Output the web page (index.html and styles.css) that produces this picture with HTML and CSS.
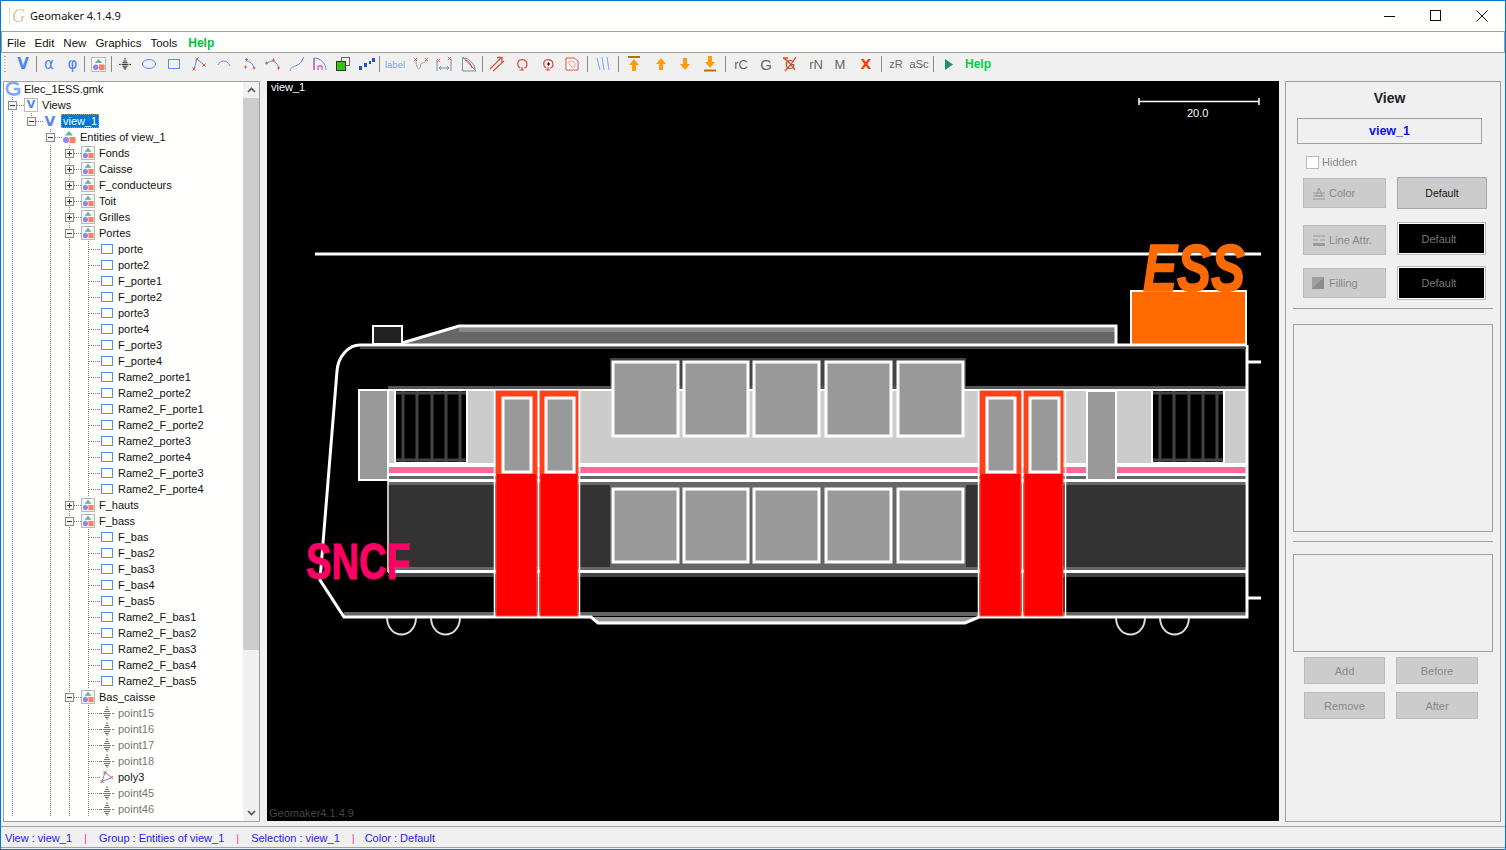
FILE: index.html
```html
<!DOCTYPE html>
<html lang="fr">
<head>
<meta charset="utf-8">
<title>Geomaker 4.1.4.9</title>
<link rel="stylesheet" href="styles.css">
</head>
<body>
<svg class="sprite" aria-hidden="true">
  <defs>
    <symbol id="i-group" viewBox="0 0 14 14">
      <path d="M7 1l4 4.5H3z" fill="#5fb88b"/>
      <circle cx="4" cy="10" r="3" fill="#9a80f0"/>
      <rect x="7.5" y="7" width="6" height="6" fill="#ff7f66"/>
    </symbol>
    <symbol id="i-rect" viewBox="0 0 14 14">
      <rect x="1.5" y="2.5" width="11" height="9" fill="#fff" stroke="#5a8cf0"/>
    </symbol>
    <symbol id="i-point" viewBox="0 0 14 14">
      <path d="M7 0v2M5 3.500h4M4 5.500h6M0 7.500h2M3 7.500h8M12 7.500h2M4 9.500h6M5 11.500h4M7 12v2" stroke="currentColor" fill="none"/>
    </symbol>
    <symbol id="i-poly" viewBox="0 0 14 14">
      <path d="M5 2.500L12 7.500 2 11.500z" fill="none" stroke="#5a8cf0"/>
      <path d="M3.500 1l3 3M6.500 1l-3 3M10 6l3 3M13 6l-3 3M.5 10l3 3M3.500 10l-3 3" stroke="#f0503c" fill="none"/>
    </symbol>
    <symbol id="i-cross" viewBox="0 0 6 6">
      <path d="M1 1l4 4M5 1L1 5" stroke="#f0503c" fill="none"/>
    </symbol>
  </defs>
</svg>

<div class="window">
  <header class="titlebar">
    <span class="logo">G</span>
    <span class="title">Geomaker 4.1.4.9</span>
    <div class="controls">
      <span class="control"><svg width="12" height="12" viewBox="0 0 12 12"><path d="M0 6.500h11" stroke="#111"/></svg></span>
      <span class="control"><svg width="12" height="12" viewBox="0 0 12 12"><rect x=".5" y=".5" width="10" height="10" fill="none" stroke="#111"/></svg></span>
      <span class="control"><svg width="12" height="12" viewBox="0 0 12 12"><path d="M.5.5l11 11M11.500.5l-11 11" stroke="#111"/></svg></span>
    </div>
  </header>

  <nav class="menubar">
    <span class="menu">File</span>
    <span class="menu">Edit</span>
    <span class="menu">New</span>
    <span class="menu">Graphics</span>
    <span class="menu">Tools</span>
    <span class="menu help">Help</span>
  </nav>

  <div class="toolbar">
    <span class="grip"></span>
    <span class="tool w26 t-v">V</span>
    <span class="sep"></span>
    <span class="tool w24 t-greek">α</span>
    <span class="tool w23 t-greek">φ</span>
    <span class="sep"></span>
    <span class="tool w26"><svg class="boxed" width="15" height="15"><use href="#i-group"/></svg></span>
    <span class="sep"></span>
    <span class="tool"><svg class="ink" width="12" height="12" viewBox="0 0 14 14"><use href="#i-point" width="14" height="14"/></svg></span>
    <span class="tool w24"><svg width="16" height="12" viewBox="0 0 16 12"><ellipse cx="8" cy="6" rx="6.500" ry="4.500" fill="none" stroke="#5a8cf0"/></svg></span>
    <span class="tool"><svg width="14" height="12" viewBox="0 0 14 12"><rect x="1.500" y="1.500" width="11" height="9" fill="none" stroke="#5a8cf0"/></svg></span>
    <span class="tool"><svg width="14" height="14" viewBox="0 0 14 14"><path d="M2 12L5 2l7 6" fill="none" stroke="#5a8cf0"/><path d="M.5 10.500l3 3M3.500 10.500l-3 3M3.500.5l3 3M6.500.5l-3 3M10.500 6.500l3 3M13.500 6.500l-3 3" stroke="#f0503c" fill="none"/></svg></span>
    <span class="tool"><svg width="14" height="10" viewBox="0 0 14 10"><path d="M1 6C3 1 10 0 13 7" fill="none" stroke="#5a8cf0"/></svg></span>
    <span class="tool"><svg width="14" height="14" viewBox="0 0 14 14"><path d="M4 4c4 0 7 3 8 7" fill="none" stroke="#5a8cf0"/><path d="M2 10h3M3.500 8.500v3M3 2.500h3M4.500 1v3M10.500 11h3M12 9.500v3" stroke="#f0503c"/></svg></span>
    <span class="tool w24"><svg width="16" height="12" viewBox="0 0 16 12"><path d="M2 6c2-4 9-5 12 4" fill="none" stroke="#5a8cf0"/><path d="M0 5h3M1.500 3.500v3M12 10h3M13.500 8.500v3M7 2h3M8.500.5v3" stroke="#f0503c"/></svg></span>
    <span class="tool w24"><svg width="16" height="16" viewBox="0 0 16 16"><path d="M1 15c1-5 5-4 9-7s3-5 5-7" fill="none" stroke="#5a8cf0"/></svg></span>
    <span class="tool w22"><svg width="14" height="14" viewBox="0 0 14 14"><path d="M1 13V1c6 0 12 5 12 12" fill="none" stroke="#5a8cf0"/><path d="M1 13V1" stroke="#d040a0"/><path d="M5 13V9h4v4" fill="none" stroke="#e020c0"/></svg></span>
    <span class="tool w24"><svg width="14" height="14" viewBox="0 0 14 14"><rect x="5.500" y=".5" width="8" height="8" fill="#eee" stroke="#666"/><rect x=".5" y="4.500" width="9" height="9" fill="#34c414" stroke="#333"/></svg></span>
    <span class="tool w24"><svg width="16" height="14" viewBox="0 0 16 14"><path d="M0 9h3v4H0zM5 6h3v4H5zM10 4h2v3h-2zM13 1h3v4h-3z" fill="#1f50d0"/></svg></span>
    <span class="sep"></span>
    <span class="tool w30 t-label">label</span>
    <span class="tool w22"><svg width="16" height="14" viewBox="0 0 16 14"><path d="M3 3c0 4 1 9 3 9s1-6 3-6 3-1 5-3" fill="none" stroke="#8da0b8"/><use href="#i-cross" x="0" y="0" width="5" height="5"/><use href="#i-cross" x="11" y="0" width="5" height="5"/></svg></span>
    <span class="tool w24"><svg width="16" height="16" viewBox="0 0 16 16"><path d="M1 4v11M15 2v13M3 12h10M3 12l2-2M3 12l2 2M13 12l-2-2M13 12l-2 2" fill="none" stroke="#7d8ca0"/><use href="#i-cross" x="0" y="2" width="5" height="5"/><use href="#i-cross" x="11" y="0" width="5" height="5"/></svg></span>
    <span class="tool w26"><svg width="16" height="16" viewBox="0 0 16 16"><path d="M1.500 1v14H15M1.500 1L15 15" fill="none" stroke="#7d8ca0"/><path d="M2 2c6 0 12 6 12 12" fill="none" stroke="#7d8ca0"/><path d="M4 4c4 1 6 4 7 8" fill="none" stroke="#e8402c"/></svg></span>
    <span class="sep"></span>
    <span class="tool w28"><svg width="16" height="16" viewBox="0 0 16 16"><path d="M1 13L12 2M8 1.500h5v5M4 15L15 5" fill="none" stroke="#d0564c" stroke-width="1.300"/></svg></span>
    <span class="tool w22"><svg width="12" height="13" viewBox="0 0 12 13"><path d="M4 10C1 8 1 3 4 2s7 0 7 4-2 4-3 4M3.500 12H8M6 9v3" fill="none" stroke="#e04434" stroke-width="1.200"/></svg></span>
    <span class="tool w30"><svg width="13" height="13" viewBox="0 0 13 13"><path d="M4 10C1 8 1 3 4 2s7 0 7 4-2 4-3 4M3.500 12H8M6 9v3" fill="none" stroke="#e04434" stroke-width="1.200"/><path d="M5 6h3M6.500 4.500v3" stroke="#000"/></svg></span>
    <span class="tool w18 gap6"><svg width="14" height="14" viewBox="0 0 14 14"><path d="M1 1h8l4 3v9H1z" fill="#fff" stroke="#d8503c"/><path d="M4 4h4l2 2v4H7L4 7z" fill="#fff0ee" stroke="#f0a090"/></svg></span>
    <span class="sep"></span>
    <span class="tool w30"><svg width="14" height="14" viewBox="0 0 14 14"><path d="M1 1l3 12M6 0l2 13M11 0l2 13" fill="none" stroke="#7da6ff"/></svg></span>
    <span class="sep"></span>
    <span class="tool w30"><svg width="14" height="16" viewBox="0 0 14 16"><path d="M1 1h12" stroke="#b87000" stroke-width="2"/><path d="M7 3l5 6H9v6H5V9H2z" fill="#ff9c0e"/></svg></span>
    <span class="tool w23"><svg width="12" height="14" viewBox="0 0 12 14"><path d="M6 1l5 6H8v6H4V7H1z" fill="#ff9c0e"/></svg></span>
    <span class="tool w26"><svg width="12" height="14" viewBox="0 0 12 14"><path d="M6 13l5-6H8V1H4v6H1z" fill="#ff9c0e"/></svg></span>
    <span class="tool w24 gap3"><svg width="14" height="16" viewBox="0 0 14 16"><path d="M7 12l5-6H9V0H5v6H2z" fill="#ff9c0e"/><path d="M1 14.500h12" stroke="#b87000" stroke-width="2"/></svg></span>
    <span class="sep"></span>
    <span class="tool w30 t-txt">rC</span>
    <span class="tool w20 t-txt t-big">G</span>
    <span class="tool w28 t-stack"><span class="t-txt">G</span><svg class="strike" width="16" height="16" viewBox="0 0 16 16"><path d="M1 2c4 1 9 8 12 12M14 1C11 6 7 11 3 15M1 2h5" fill="none" stroke="#ff4a14" stroke-width="1.400"/></svg></span>
    <span class="tool w24 t-txt">rN</span>
    <span class="tool w24 t-txt">M</span>
    <span class="tool w28 t-x">X</span>
    <span class="sep gap1"></span>
    <span class="tool w28 t-txt t-small">zR</span>
    <span class="tool w18 gap5 t-txt t-small">aSc</span>
    <span class="sep"></span>
    <span class="tool w30"><svg width="10" height="11" viewBox="0 0 10 11"><path d="M1 0l8 5.500L1 11z" fill="#1d9468"/></svg></span>
    <span class="t-help">Help</span>
  </div>

  <main class="main">
    <section class="tree-panel">
      <div class="tree">
        <div class="row root"><svg class="glyph" width="16" height="16" viewBox="0 0 16 16"><path d="M13.500 4C11 1 5 1 3 4s-1 8 3 9 7 0 8-1V8H9" fill="none" stroke="#7da6ff" stroke-width="2.600"/></svg><span class="label">Elec_1ESS.gmk</span></div>
        <div class="row open l0"><i class="exp"></i><i class="h"></i><span class="vbox">V</span><span class="label">Views</span></div>
        <div class="row open l1 gv"><i class="exp"></i><i class="h"></i><span class="vbare">V</span><span class="label sel">view_1</span></div>
        <div class="row open l2 gv"><i class="exp"></i><i class="h"></i><svg class="glyph" width="14" height="14"><use href="#i-group"/></svg><span class="label">Entities of view_1</span></div>
        <div class="row l3 g3"><i class="exp plus"></i><i class="h"></i><svg class="boxed" width="14" height="14"><use href="#i-group"/></svg><span class="label">Fonds</span></div>
        <div class="row l3 g3"><i class="exp plus"></i><i class="h"></i><svg class="boxed" width="14" height="14"><use href="#i-group"/></svg><span class="label">Caisse</span></div>
        <div class="row l3 g3"><i class="exp plus"></i><i class="h"></i><svg class="boxed" width="14" height="14"><use href="#i-group"/></svg><span class="label">F_conducteurs</span></div>
        <div class="row l3 g3"><i class="exp plus"></i><i class="h"></i><svg class="boxed" width="14" height="14"><use href="#i-group"/></svg><span class="label">Toit</span></div>
        <div class="row l3 g3"><i class="exp plus"></i><i class="h"></i><svg class="boxed" width="14" height="14"><use href="#i-group"/></svg><span class="label">Grilles</span></div>
        <div class="row l3 g3"><i class="exp"></i><i class="h"></i><svg class="boxed" width="14" height="14"><use href="#i-group"/></svg><span class="label">Portes</span></div>
        <div class="row leaf g4"><i class="h"></i><svg width="14" height="14"><use href="#i-rect"/></svg><span class="label">porte</span></div>
        <div class="row leaf g4"><i class="h"></i><svg width="14" height="14"><use href="#i-rect"/></svg><span class="label">porte2</span></div>
        <div class="row leaf g4"><i class="h"></i><svg width="14" height="14"><use href="#i-rect"/></svg><span class="label">F_porte1</span></div>
        <div class="row leaf g4"><i class="h"></i><svg width="14" height="14"><use href="#i-rect"/></svg><span class="label">F_porte2</span></div>
        <div class="row leaf g4"><i class="h"></i><svg width="14" height="14"><use href="#i-rect"/></svg><span class="label">porte3</span></div>
        <div class="row leaf g4"><i class="h"></i><svg width="14" height="14"><use href="#i-rect"/></svg><span class="label">porte4</span></div>
        <div class="row leaf g4"><i class="h"></i><svg width="14" height="14"><use href="#i-rect"/></svg><span class="label">F_porte3</span></div>
        <div class="row leaf g4"><i class="h"></i><svg width="14" height="14"><use href="#i-rect"/></svg><span class="label">F_porte4</span></div>
        <div class="row leaf g4"><i class="h"></i><svg width="14" height="14"><use href="#i-rect"/></svg><span class="label">Rame2_porte1</span></div>
        <div class="row leaf g4"><i class="h"></i><svg width="14" height="14"><use href="#i-rect"/></svg><span class="label">Rame2_porte2</span></div>
        <div class="row leaf g4"><i class="h"></i><svg width="14" height="14"><use href="#i-rect"/></svg><span class="label">Rame2_F_porte1</span></div>
        <div class="row leaf g4"><i class="h"></i><svg width="14" height="14"><use href="#i-rect"/></svg><span class="label">Rame2_F_porte2</span></div>
        <div class="row leaf g4"><i class="h"></i><svg width="14" height="14"><use href="#i-rect"/></svg><span class="label">Rame2_porte3</span></div>
        <div class="row leaf g4"><i class="h"></i><svg width="14" height="14"><use href="#i-rect"/></svg><span class="label">Rame2_porte4</span></div>
        <div class="row leaf g4"><i class="h"></i><svg width="14" height="14"><use href="#i-rect"/></svg><span class="label">Rame2_F_porte3</span></div>
        <div class="row leaf g4"><i class="h"></i><svg width="14" height="14"><use href="#i-rect"/></svg><span class="label">Rame2_F_porte4</span></div>
        <div class="row l3 g3"><i class="exp plus"></i><i class="h"></i><svg class="boxed" width="14" height="14"><use href="#i-group"/></svg><span class="label">F_hauts</span></div>
        <div class="row l3 g3"><i class="exp"></i><i class="h"></i><svg class="boxed" width="14" height="14"><use href="#i-group"/></svg><span class="label">F_bass</span></div>
        <div class="row leaf g4"><i class="h"></i><svg width="14" height="14"><use href="#i-rect"/></svg><span class="label">F_bas</span></div>
        <div class="row leaf g4"><i class="h"></i><svg width="14" height="14"><use href="#i-rect"/></svg><span class="label">F_bas2</span></div>
        <div class="row leaf g4"><i class="h"></i><svg width="14" height="14"><use href="#i-rect"/></svg><span class="label">F_bas3</span></div>
        <div class="row leaf g4"><i class="h"></i><svg width="14" height="14"><use href="#i-rect"/></svg><span class="label">F_bas4</span></div>
        <div class="row leaf g4"><i class="h"></i><svg width="14" height="14"><use href="#i-rect"/></svg><span class="label">F_bas5</span></div>
        <div class="row leaf g4"><i class="h"></i><svg width="14" height="14"><use href="#i-rect"/></svg><span class="label">Rame2_F_bas1</span></div>
        <div class="row leaf g4"><i class="h"></i><svg width="14" height="14"><use href="#i-rect"/></svg><span class="label">Rame2_F_bas2</span></div>
        <div class="row leaf g4"><i class="h"></i><svg width="14" height="14"><use href="#i-rect"/></svg><span class="label">Rame2_F_bas3</span></div>
        <div class="row leaf g4"><i class="h"></i><svg width="14" height="14"><use href="#i-rect"/></svg><span class="label">Rame2_F_bas4</span></div>
        <div class="row leaf g4"><i class="h"></i><svg width="14" height="14"><use href="#i-rect"/></svg><span class="label">Rame2_F_bas5</span></div>
        <div class="row l3 g3"><i class="exp"></i><i class="h"></i><svg class="boxed" width="14" height="14"><use href="#i-group"/></svg><span class="label">Bas_caisse</span></div>
        <div class="row leaf g4 muted"><i class="h"></i><svg width="14" height="14"><use href="#i-point"/></svg><span class="label">point15</span></div>
        <div class="row leaf g4 muted"><i class="h"></i><svg width="14" height="14"><use href="#i-point"/></svg><span class="label">point16</span></div>
        <div class="row leaf g4 muted"><i class="h"></i><svg width="14" height="14"><use href="#i-point"/></svg><span class="label">point17</span></div>
        <div class="row leaf g4 muted"><i class="h"></i><svg width="14" height="14"><use href="#i-point"/></svg><span class="label">point18</span></div>
        <div class="row leaf g4"><i class="h"></i><svg width="14" height="14"><use href="#i-poly"/></svg><span class="label">poly3</span></div>
        <div class="row leaf g4 muted"><i class="h"></i><svg width="14" height="14"><use href="#i-point"/></svg><span class="label">point45</span></div>
        <div class="row leaf g4 muted"><i class="h"></i><svg width="14" height="14"><use href="#i-point"/></svg><span class="label">point46</span></div>
      </div>
      <div class="scrollbar">
        <span class="arrow"><svg width="9" height="6" viewBox="0 0 9 6"><path d="M1 5l3.500-3.500L8 5" fill="none" stroke="#555" stroke-width="1.600"/></svg></span>
        <span class="thumb"></span>
        <span class="track"></span>
        <span class="arrow"><svg width="9" height="6" viewBox="0 0 9 6"><path d="M1 1l3.500 3.500L8 1" fill="none" stroke="#555" stroke-width="1.600"/></svg></span>
      </div>
    </section>

    <section class="canvas">
      <svg class="drawing" width="1012" height="740" viewBox="267 81 1012 740">
        <text class="c-name" x="271" y="91">view_1</text>
        <path class="line1" d="M1139 98v7M1259 98v7M1139 101.500h120"/>
        <text class="c-scale" x="1187" y="117">20.0</text>
        <text class="c-foot" x="269" y="817">Geomaker4.1.4.9</text>

        <path class="line" d="M315 254h946"/>

        <!-- roof -->
        <path class="roof" d="M459 326h657v18H402z"/>
        <rect class="roof-hi" x="459" y="328" width="656" height="4"/>
        <path class="line" d="M402 343l57-17h657v18"/>
        <rect class="cap" x="373" y="326" width="29" height="18"/>

        <!-- ESS box -->
        <rect class="ess" x="1131" y="291" width="115" height="54"/>

        <!-- upper light band, pink stripe, dark lower band -->
        <rect class="halo3" x="610" y="358" width="356" height="28"/>
        <rect class="halo" x="388" y="386" width="858" height="4"/>
        <rect class="band" x="388" y="390" width="858" height="74"/>
        <rect class="white" x="388" y="389" width="858" height="2"/>
        <rect class="white" x="388" y="463" width="858" height="4"/>
        <rect class="pink" x="388" y="467" width="858" height="6"/>
        <rect class="white" x="388" y="473" width="858" height="3"/>
        <rect class="halo2" x="388" y="476" width="858" height="3"/>
        <rect class="white" x="388" y="479" width="858" height="3"/>
        <rect class="halo2" x="388" y="482" width="858" height="3"/>
        <rect class="dark" x="389" y="485" width="856" height="82"/>
        <rect class="halo2" x="610" y="485" width="356" height="82"/>
        <rect class="halo2" x="388" y="567" width="858" height="3"/>
        <rect class="white" x="388" y="570" width="858" height="3"/>
        <rect class="halo3" x="388" y="573" width="858" height="4"/>
        <rect class="halo2" x="344" y="612" width="902" height="4"/>

        <!-- body outline -->
        <path class="under" d="M591 617l7 6h367l14-6z"/>
        <path class="line" d="M1247 345H360c-12 0-22 12-23 26L320 580l24 37h247l7 6h367l14-6h268V345"/>
        <path class="line" d="M1247 362h14M1247 598h14"/>
        <path class="line1" d="M388 390v182"/>
        <rect class="halo3" x="360" y="347" width="886" height="2"/>

        <!-- left column + right column -->
        <rect class="col" x="359" y="390" width="29" height="90"/>
        <rect class="col" x="1087" y="391" width="29" height="89"/>

        <!-- grilles -->
        <g class="grille">
          <rect class="g-bg" x="395" y="390" width="72" height="73"/>
          <path class="g-bars" d="M403 391v71M417 391v71M432 391v71M446 391v71M460 391v71M396 393h70M396 460h70"/>
          <rect class="g-bg" x="1152" y="390" width="72" height="73"/>
          <path class="g-bars" d="M1160 391v71M1174 391v71M1189 391v71M1203 391v71M1217 391v71M1153 393h70M1153 460h70"/>
        </g>

        <!-- doors -->
        <rect class="door" x="496" y="391" width="41" height="225"/>
        <rect class="door" x="540" y="391" width="38" height="225"/>
        <rect class="door" x="980" y="391" width="41" height="225"/>
        <rect class="door" x="1024" y="391" width="39" height="225"/>
        <rect class="door-top" x="496" y="391" width="41" height="83"/>
        <rect class="door-top" x="540" y="391" width="38" height="83"/>
        <rect class="door-top" x="980" y="391" width="41" height="83"/>
        <rect class="door-top" x="1024" y="391" width="39" height="83"/>
        <path class="line1" d="M494.500 391v226M538.500 391v226M579.500 391v226M978.500 391v226M1022.500 391v226M1065.500 391v226"/>
        <rect class="win" x="503" y="398" width="28" height="74"/>
        <rect class="win" x="546" y="398" width="28" height="74"/>
        <rect class="win" x="987" y="398" width="28" height="74"/>
        <rect class="win" x="1030" y="398" width="29" height="74"/>

        <!-- upper windows -->
        <rect class="win" x="613" y="362" width="65" height="74"/>
        <rect class="win" x="684" y="362" width="64" height="74"/>
        <rect class="win" x="754" y="362" width="65" height="74"/>
        <rect class="win" x="826" y="362" width="65" height="74"/>
        <rect class="win" x="898" y="362" width="65" height="74"/>
        <!-- lower windows -->
        <rect class="win" x="613" y="489" width="65" height="73"/>
        <rect class="win" x="684" y="489" width="64" height="73"/>
        <rect class="win" x="754" y="489" width="65" height="73"/>
        <rect class="win" x="826" y="489" width="65" height="73"/>
        <rect class="win" x="898" y="489" width="65" height="73"/>

        <!-- wheels -->
        <path class="wheel" d="M387 618c1 22 28 22 29 0M431 618c1 22 28 22 29 0M1116 618c1 22 28 22 29 0M1160 618c1 22 28 22 29 0"/>

        <text class="t-ess" x="1143" y="291" textLength="102" lengthAdjust="spacingAndGlyphs">ESS</text>
        <text class="t-sncf" x="306" y="579" textLength="104" lengthAdjust="spacingAndGlyphs">SNCF</text>
      </svg>
    </section>

    <aside class="side">
      <h2 class="side-title">View</h2>
      <div class="name-box">view_1</div>
      <label class="check"><span class="box"></span>Hidden</label>
      <div class="attr">
        <span class="btn"><svg width="14" height="13" viewBox="0 0 14 13"><path d="M1 6h12M1 9h12M1 12h12M7 1l3 8H4z" fill="none" stroke="#999"/></svg>Color</span>
        <span class="val light">Default</span>
      </div>
      <div class="attr low">
        <span class="btn"><svg width="14" height="13" viewBox="0 0 14 13"><path d="M1 2h12M1 6h5M8 6h5" fill="none" stroke="#999"/><path d="M1 10.500h12" stroke="#999" stroke-width="3"/></svg>Line Attr.</span>
        <span class="val black">Default</span>
      </div>
      <div class="attr third">
        <span class="btn fill-btn"><svg width="12" height="12" viewBox="0 0 12 12"><rect width="12" height="12" fill="#a0a0a0"/><path d="M0 12L12 0v12z" fill="#8c8c8c"/></svg>Filling</span>
        <span class="val black">Default</span>
      </div>
      <hr class="rule first">
      <div class="list tall"></div>
      <hr class="rule">
      <div class="list short"></div>
      <div class="actions">
        <span class="act">Add</span>
        <span class="act">Before</span>
        <span class="act">Remove</span>
        <span class="act">After</span>
      </div>
    </aside>
  </main>

  <footer class="status">
    <span>View : view_1</span><b>|</b>
    <span>Group : Entities of view_1</span><b>|</b>
    <span>Selection : view_1</span><b>|</b>
    <span class="last">Color : Default</span>
  </footer>
</div>
</body>
</html>
```

FILE: styles.css
```css
* { box-sizing: border-box; }
html, body { margin: 0; padding: 0; }
body {
  width: 1506px;
  height: 850px;
  overflow: hidden;
  font-family: "Liberation Sans", Arial, sans-serif;
  font-size: 11px;
  color: #111;
  background: #f0f0f0;
}
.sprite { position: absolute; width: 0; height: 0; }
svg { display: block; flex: none; }

.window {
  width: 1506px;
  height: 850px;
  border: 1px solid #0078d7;
  background: #f0f0f0;
  display: flex;
  flex-direction: column;
}

/* title */
.titlebar {
  height: 30px;
  flex: none;
  background: #fffffd;
  display: flex;
  align-items: center;
  padding-left: 8px;
  padding-bottom: 1px;
}
.logo {
  width: 21px;
  height: 18px;
  font: italic 18px/18px "Liberation Serif", serif;
  color: #d6c9a8;
  border-left: 1px solid #e6dcc4;
  padding-left: 2px;
}
.title { font-family: "Noto Sans", sans-serif; font-size: 11px; }
.controls { margin-left: auto; display: flex; }
.control { width: 46px; height: 29px; display: flex; align-items: center; justify-content: center; }

/* menu */
.menubar {
  height: 22px;
  flex: none;
  background: #fffffd;
  border: 1px solid #a0a0a0;
  display: flex;
  align-items: center;
  padding: 2px 0 0 5px;
  gap: 9px;
  font-size: 11.500px;
}
.menu { color: #111; }
.menu.help { color: #00c038; font-weight: 700; font-size: 12px; margin-left: 2px; }

/* toolbar */
.toolbar {
  height: 27px;
  flex: none;
  display: flex;
  align-items: center;
  padding: 0 0 5px 1px;
  color: #666;
}
.grip {
  width: 8px;
  height: 17px;
  background: repeating-linear-gradient(to bottom, #bbb 0 1px, transparent 1px 3px) 2px 0 / 2px 100% no-repeat;
}
.tool {
  width: 25px;
  flex: none;
  height: 22px;
  display: flex;
  align-items: center;
  justify-content: center;
  position: relative;
}
.w18 { width: 18px; } .w20 { width: 20px; } .w22 { width: 22px; } .w23 { width: 23px; }
.w24 { width: 24px; } .w26 { width: 26px; } .w28 { width: 28px; } .w30 { width: 30px; }
.gap1 { margin-left: 1px; } .gap3 { margin-right: 3px; } .gap5 { margin-right: 5px; } .gap6 { margin-right: 6px; }
.sep { width: 1px; height: 16px; background: #888; flex: none; }
.boxed { border: 1px solid #bbb; background: #f6f6f6; }
.ink { color: #111; }
.t-v { color: #4f86f0; font-weight: 700; font-size: 15px; font-family: "DejaVu Sans", sans-serif; }
.t-greek { color: #4f86f0; font-size: 15px; font-family: "DejaVu Sans", sans-serif; }
.t-label { color: #7da6e8; font-size: 9.500px; }
.t-txt { color: #666; font-size: 13px; }
.t-big { font-size: 15px; }
.t-small { font-size: 11px; }
.t-stack .strike { position: absolute; left: 6px; top: 3px; }
.t-x { color: #ff3c00; font-weight: 700; font-size: 14px; font-family: "DejaVu Sans", sans-serif; }
.t-help { color: #00d040; font-weight: 700; font-size: 12px; margin-left: 1px; }

/* main */
.main {
  display: flex;
  height: 741px;
  margin: 1px 0 0 2px;
  flex: none;
  align-items: flex-start;
}

/* tree */
.tree-panel {
  width: 257px;
  height: 741px;
  background: #fffffd;
  border: 1px solid #a0a0a0;
  display: flex;
  overflow: hidden;
  flex: none;
}
.tree { flex: 1; min-width: 0; overflow: hidden; margin-top: -1px; }
.row {
  --d: repeating-linear-gradient(to bottom, #808080 0 1px, transparent 1px 2px);
  height: 16px;
  display: flex;
  align-items: center;
  white-space: nowrap;
}
.root .glyph { margin: 0 3px 0 1px; }
.l0 { padding-left: 4px; background: var(--d) 8px 8px / 1px 100% no-repeat; }
.l1 { padding-left: 23px; }
.l2 { padding-left: 42px; }
.l3 { padding-left: 61px; }
.gv { background: var(--d) 8px 0 / 1px 100% no-repeat; }
.g3 {
  background:
    var(--d) 8px 0 / 1px 100% no-repeat,
    var(--d) 46px 0 / 1px 100% no-repeat,
    var(--d) 65px 0 / 1px 100% no-repeat;
}
.g4 {
  background:
    var(--d) 8px 0 / 1px 100% no-repeat,
    var(--d) 46px 0 / 1px 100% no-repeat,
    var(--d) 65px 0 / 1px 100% no-repeat,
    var(--d) 84px 0 / 1px 100% no-repeat;
}
.leaf { padding-left: 85px; }
.exp {
  width: 9px;
  height: 9px;
  flex: none;
  position: relative;
  border: 1px solid #8a8a8a;
  background: linear-gradient(#333, #333) center / 5px 1px no-repeat, #f4f4f4;
}
.exp::before {
  content: "";
  position: absolute;
  left: 3px;
  top: -5px;
  height: 4px;
  width: 1px;
  background: repeating-linear-gradient(to bottom, #808080 0 1px, transparent 1px 2px);
}
.exp.plus {
  background:
    linear-gradient(#333, #333) center / 5px 1px no-repeat,
    linear-gradient(#333, #333) center / 1px 5px no-repeat,
    #f4f4f4;
}
.h {
  height: 1px;
  width: 7px;
  flex: none;
  background: repeating-linear-gradient(to right, #808080 0 1px, transparent 1px 2px);
}
.leaf .h { width: 11px; }
.label { margin-left: 4px; }
.root .label { margin-left: 0; }
.muted .label { color: #777; }
.muted svg { color: #777; }
.vbox {
  width: 14px;
  height: 14px;
  flex: none;
  border: 1px solid #bbb;
  color: #4f86f0;
  font: 700 11px "DejaVu Sans", sans-serif;
  text-align: center;
  line-height: 12px;
}
.vbare {
  width: 14px;
  flex: none;
  color: #4f86f0;
  font: 700 14px "DejaVu Sans", sans-serif;
  text-align: center;
}
.sel {
  background: #0078d7;
  color: #fff;
  outline: 1px dotted #e09020;
  outline-offset: -1px;
  padding: 0 2px;
  height: 14px;
  line-height: 14px;
}
.scrollbar {
  width: 16px;
  flex: none;
  background: #f0f0f0;
  display: flex;
  flex-direction: column;
}
.arrow { height: 16px; flex: none; display: flex; align-items: center; justify-content: center; }
.thumb { height: 552px; flex: none; background: #cdcdcd; }
.track { flex: 1; }

/* canvas */
.canvas {
  width: 1012px;
  height: 740px;
  margin-left: 7px;
  background: #000;
  flex: none;
}
.drawing { font-family: "Liberation Sans", sans-serif; font-size: 11px; }
.c-name, .c-scale { fill: #fff; }
.c-foot { fill: #444; }
.line { fill: none; stroke: #fff; stroke-width: 3; }
.line1 { fill: none; stroke: #fff; stroke-width: 1.500; }
.under { fill: #999; }
.roof { fill: #666; }
.roof-hi { fill: #888; }
.cap { fill: #222; stroke: #fff; stroke-width: 2; }
.ess { fill: #ff6a00; stroke: #fff; stroke-width: 2; }
.halo { fill: #555; }
.halo2 { fill: #666; }
.halo3 { fill: #444; }
.band { fill: #ccc; }
.white { fill: #fff; }
.pink { fill: #ff6699; }
.dark { fill: #333; }
.col { fill: #999; stroke: #fff; stroke-width: 2; }
.g-bg { fill: #000; stroke: #fff; stroke-width: 2; }
.g-bars { fill: none; stroke: #444; stroke-width: 3; }
.door { fill: #f00; stroke: #ff5c38; stroke-width: 1; }
.door-top { fill: #ff4019; }
.win { fill: #999; stroke: #fff; stroke-width: 3; }
.wheel { fill: none; stroke: #ddd; stroke-width: 2; }
.t-ess { fill: #ff6a00; stroke: #ff6a00; stroke-width: 1.500; font-size: 66px; font-weight: 700; font-style: italic; }
.t-sncf { fill: #ff0066; stroke: #ff0066; stroke-width: 1; font-size: 50px; font-weight: 700; }

/* side panel */
.side {
  width: 216px;
  height: 741px;
  margin-left: 6px;
  flex: none;
  border: 1px solid #a0a0a0;
}
.side-title {
  margin: 7px 0 11px;
  height: 18px;
  font-size: 14px;
  line-height: 18px;
  text-align: center;
  color: #222;
  padding-right: 7px;
}
.name-box {
  margin-left: 11px;
  width: 185px;
  height: 26px;
  border: 1px solid #a0a0a0;
  color: #1010ee;
  font-weight: 700;
  font-size: 12.500px;
  text-align: center;
  line-height: 24px;
}
.check {
  display: flex;
  align-items: center;
  gap: 3px;
  margin: 11px 0 8px 20px;
  height: 14px;
  color: #888;
}
.box { width: 13px; height: 13px; background: #fff; border: 1px solid #bbb; }
.attr { display: flex; align-items: center; gap: 11px; padding-left: 17px; height: 32px; }
.attr.low { height: 33px; margin-top: 13px; align-items: flex-end; }
.attr.third { height: 34px; margin-top: 11px; }
.btn {
  width: 83px;
  height: 30px;
  background: #ccc;
  border: 1px solid #bbb;
  color: #888;
  display: flex;
  align-items: center;
  gap: 3px;
  padding-left: 8px;
  flex: none;
}
.fill-btn { gap: 5px; }
.val {
  height: 100%;
  flex: none;
  display: flex;
  align-items: center;
  justify-content: center;
  font-size: 11px;
}
.val.light { width: 90px; background: #ccc; border: 1px solid #a8a8b0; color: #111; font-size: 10.500px; }
.val.black { width: 89px; background: #000; border: 1px solid #bbb; outline: 1px solid #fff; outline-offset: -2px; color: #777; padding-right: 5px; }
.rule { height: 1px; border: 0; background: #a0a0a0; margin: 0 7px; }
.rule.first { margin-top: 8px; margin-bottom: 15px; }
.list { margin: 0 7px; width: 200px; border: 1px solid #a0a0a0; }
.list.tall { height: 208px; margin-bottom: 9px; }
.list.short { height: 98px; margin-top: 12px; }
.actions {
  display: grid;
  grid-template-columns: 81px 82px;
  grid-auto-rows: 27px;
  gap: 8px 11px;
  margin: 5px 0 0 18px;
}
.act {
  background: #ccc;
  border: 1px solid #bbb;
  color: #888;
  display: flex;
  align-items: center;
  justify-content: center;
}

/* status */
.status {
  height: 22px;
  margin-top: 4px;
  flex: none;
  border-top: 1px solid #a0a0a0;
  border-bottom: 1px solid #a0a0a0;
  display: flex;
  align-items: center;
  gap: 12px;
  padding: 1px 0 0 4px;
  color: #2a1af0;
}
.status .last { margin-left: -2px; }
.status b { color: #f040a0; font-weight: 400; }
```
